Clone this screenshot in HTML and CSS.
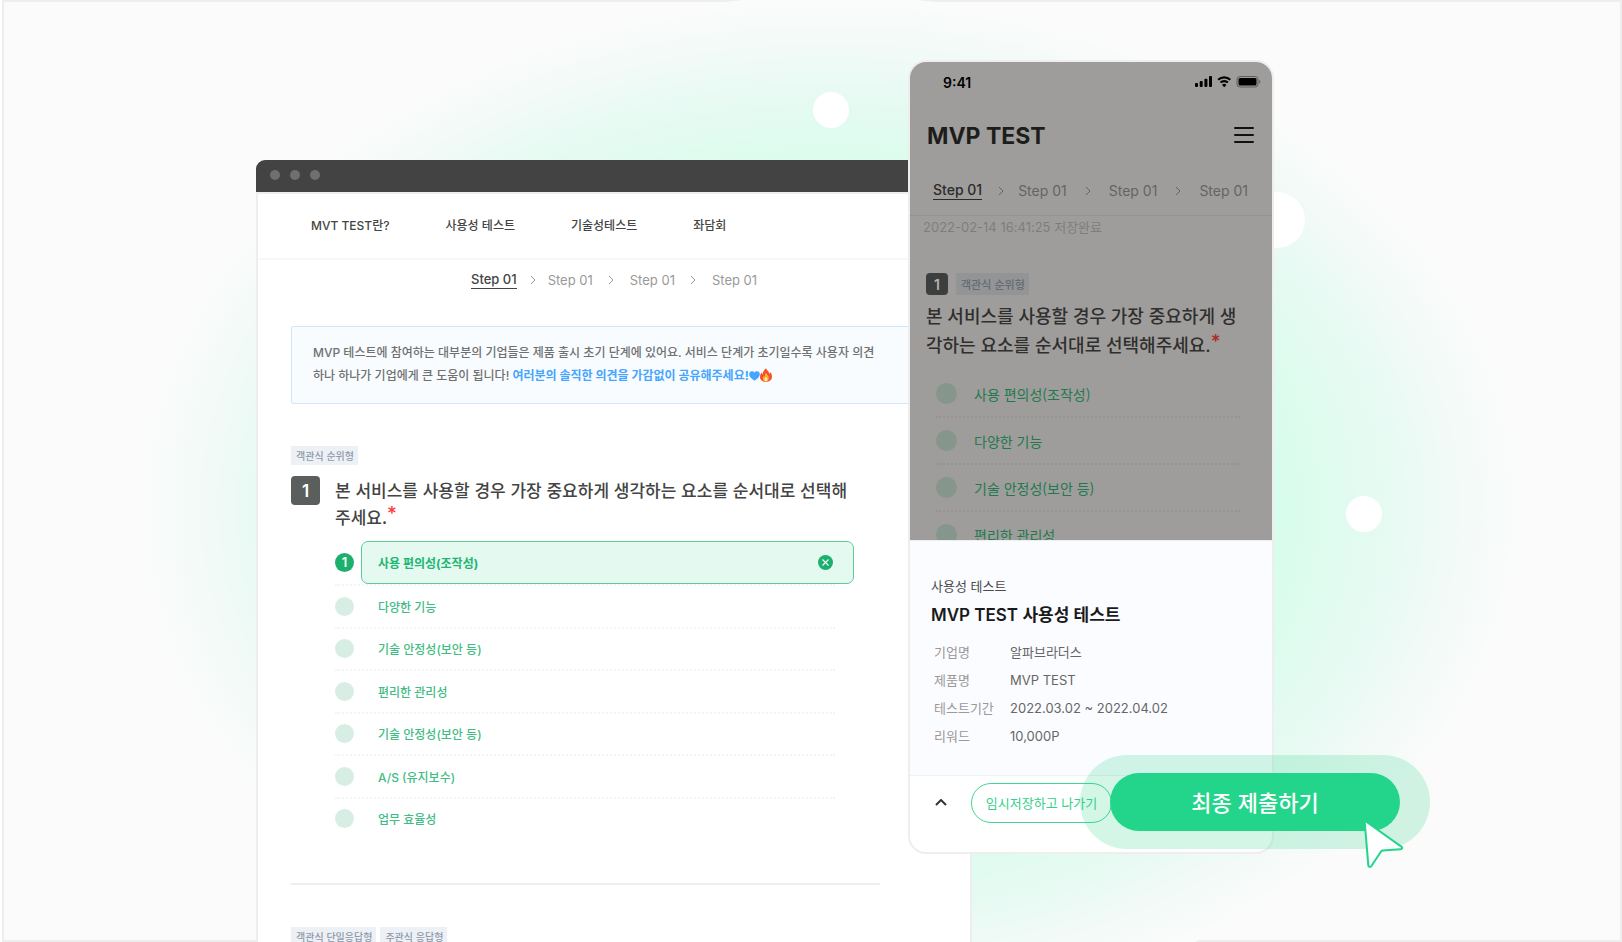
FILE: index.html
```html
<!DOCTYPE html>
<html lang="ko">
<head>
<meta charset="utf-8">
<meta name="viewport" content="width=device-width, initial-scale=1">
<title>MVP TEST</title>
<link rel="stylesheet" href="styles.css">
</head>
<body>
<main class="scene">
  <div class="frame"></div>
  <div class="glow"></div>
  <span class="bubble bubble-top"></span>
  <span class="bubble bubble-side"></span>
  <span class="bubble bubble-right"></span>

  <section class="browser">
    <div class="titlebar"><i></i><i></i><i></i></div>
    <div class="page">
      <nav class="menu">
        <a href="#">MVT TEST란?</a>
        <a href="#">사용성 테스트</a>
        <a href="#">기술성테스트</a>
        <a href="#">좌담회</a>
      </nav>
      <ol class="steps">
        <li class="current"><span>Step 01</span></li>
        <li><svg viewBox="0 0 6 10"><path d="M1 1l4 4-4 4"/></svg><span>Step 01</span></li>
        <li><svg viewBox="0 0 6 10"><path d="M1 1l4 4-4 4"/></svg><span>Step 01</span></li>
        <li><svg viewBox="0 0 6 10"><path d="M1 1l4 4-4 4"/></svg><span>Step 01</span></li>
      </ol>
      <p class="notice">MVP 테스트에 참여하는 대부분의 기업들은 제품 출시 초기 단계에 있어요. 서비스 단계가 초기일수록 사용자 의견<br>하나 하나가 기업에게 큰 도움이 됩니다! <strong>여러분의 솔직한 의견을 가감없이 공유해주세요!<svg class="heart" viewBox="0 0 11 10"><path d="M5.500 9.800C2 7.200.2 5.500.2 3.200.2 1.500 1.400.3 3 .3c1 0 2 .5 2.500 1.400C6 .8 7 .3 8 .3c1.600 0 2.800 1.200 2.800 2.900 0 2.300-1.800 4-5.300 6.600z"/></svg><svg class="fire" viewBox="0 0 12 14"><path fill="#f4512c" d="M6 .2c.7 2 3.200 3.200 3.400 5.600.6-.4.800-1 .8-1.700C11.400 5.400 12 7 12 8.800 12 11.800 9.400 14 6 14S0 11.800 0 8.900c0-2 .9-3.300 1.800-4.400 0 1 .3 1.600.9 2C2.600 3.800 4.200 2 6 .2z"/><path fill="#ffb02e" d="M6.200 4.800c.2 1.700 2.600 2.700 2.600 5.300 0 2-1.200 3.500-2.900 3.500s-3-1.300-3-3.200c0-1.200.5-2 1.100-2.700.1.700.4 1 .8 1.200-.1-1.700.3-3 1.400-4.100z"/><path fill="#fff0b0" d="M6 9c.9.9 1.400 1.600 1.400 2.600S6.800 13.400 6 13.400s-1.500-.7-1.500-1.800S5.200 9.800 6 9z"/></svg></strong></p>

      <section class="question">
        <span class="tag">객관식 순위형</span>
        <div class="question-row">
          <span class="number">1</span>
          <h2>본 서비스를 사용할 경우 가장 중요하게 생각하는 요소를 순서대로 선택해<br>주세요.<sup>*</sup></h2>
        </div>
        <ol class="options">
          <li class="picked">
            <span class="dot">1</span>
            <div class="choice"><span>사용 편의성(조작성)</span>
              <button class="remove" type="button" aria-label="선택 취소"><svg viewBox="0 0 14 14"><circle cx="7" cy="7" r="7"/><path d="M4.200 4.200l5.600 5.600M9.800 4.200l-5.600 5.600"/></svg></button>
            </div>
          </li>
          <li><span class="dot"></span><button type="button">다양한 기능</button></li>
          <li><span class="dot"></span><button type="button">기술 안정성(보안 등)</button></li>
          <li><span class="dot"></span><button type="button">편리한 관리성</button></li>
          <li><span class="dot"></span><button type="button">기술 안정성(보안 등)</button></li>
          <li><span class="dot"></span><button type="button">A/S (유지보수)</button></li>
          <li><span class="dot"></span><button type="button">업무 효율성</button></li>
        </ol>
      </section>
      <hr>
      <div class="tags"><span class="tag">객관식 단일응답형</span><span class="tag">주관식 응답형</span></div>
    </div>
  </section>

  <section class="phone">
    <div class="screen">
      <div class="status">
        <span>9:41</span>
        <svg viewBox="0 0 66 12" aria-hidden="true">
          <rect x="0" y="7" width="3" height="4" rx="1"/><rect x="4.700" y="5" width="3" height="6" rx="1"/><rect x="9.400" y="2.700" width="3" height="8.300" rx="1"/><rect x="14" y="0" width="3" height="11" rx="1"/>
          <path d="M29.200 2.500c2 0 3.900.8 5.300 2.100l1.500-1.500A9.800 9.800 0 0 0 29.200.2a9.800 9.800 0 0 0-6.800 2.900l1.500 1.500a7.700 7.700 0 0 1 5.300-2.100z"/><path d="M29.200 6.200c1.100 0 2.100.4 2.900 1.100l1.500-1.500a6.300 6.300 0 0 0-8.800 0l1.500 1.500c.8-.7 1.800-1.100 2.900-1.100z"/><path d="M29.200 11.200l2.200-2.300a3.200 3.200 0 0 0-4.400 0z"/>
          <rect x="42" y=".5" width="21" height="10.500" rx="3" fill="none" stroke="#000" stroke-opacity=".4"/><rect x="43.500" y="2" width="18" height="7.500" rx="1.500"/><path d="M64.200 4v3.600c.8-.3 1.200-1 1.200-1.800s-.4-1.500-1.200-1.800z" opacity=".4"/>
        </svg>
      </div>
      <header class="brand">
        <h1>MVP TEST</h1>
        <button type="button" aria-label="메뉴"><svg viewBox="0 0 20 16"><path d="M1 1h18M1 8h18M1 15h18"/></svg></button>
      </header>
      <ol class="steps">
        <li class="current"><span>Step 01</span></li>
        <li><svg viewBox="0 0 6 10"><path d="M1 1l4 4-4 4"/></svg><span>Step 01</span></li>
        <li><svg viewBox="0 0 6 10"><path d="M1 1l4 4-4 4"/></svg><span>Step 01</span></li>
        <li><svg viewBox="0 0 6 10"><path d="M1 1l4 4-4 4"/></svg><span>Step 01</span></li>
      </ol>
      <p class="saved">2022-02-14 16:41:25 저장완료</p>
      <div class="question-meta"><span class="number">1</span><span class="tag">객관식 순위형</span></div>
      <h2>본 서비스를 사용할 경우 가장 중요하게 생<br>각하는 요소를 순서대로 선택해주세요.<sup>*</sup></h2>
      <ol class="options">
        <li><span class="dot"></span><button type="button">사용 편의성(조작성)</button></li>
        <li><span class="dot"></span><button type="button">다양한 기능</button></li>
        <li><span class="dot"></span><button type="button">기술 안정성(보안 등)</button></li>
        <li><span class="dot"></span><button type="button">편리한 관리성</button></li>
      </ol>
    </div>
    <div class="sheet">
      <p>사용성 테스트</p>
      <h3>MVP TEST 사용성 테스트</h3>
      <dl>
        <dt>기업명</dt><dd>알파브라더스</dd>
        <dt>제품명</dt><dd>MVP TEST</dd>
        <dt>테스트기간</dt><dd>2022.03.02 ~ 2022.04.02</dd>
        <dt>리워드</dt><dd>10,000P</dd>
      </dl>
    </div>
    <footer class="actions">
      <button class="fold" type="button" aria-label="접기"><svg viewBox="0 0 12 7"><path d="M1 6l5-5 5 5"/></svg></button>
      <button class="save" type="button">임시저장하고 나가기</button>
    </footer>
  </section>

  <div class="halo">
    <button type="button">최종 제출하기</button>
    <svg class="cursor" viewBox="0 0 40 50"><path d="M1.800 3.200C1.700 1.800 2.600 1.200 3.700 2l34.600 24.600c1.500 1.100 1 2.600-.8 2.700l-17.800 1.200a2 2 0 0 0-1.500.8L8.400 46c-1.100 1.500-3 1-3.100-.9z"/></svg>
  </div>
</main>
</body>
</html>
```
FILE: styles.css
```css
* { box-sizing: border-box; }
body { margin: 0; background: #fff; color: #444; font-family: Inter, "Noto Sans CJK KR", sans-serif; font-size: 13px; }
h1, h2, h3, p, ol, dl, dd { margin: 0; padding: 0; }
ol { list-style: none; }
button { padding: 0; border: 0; background: none; color: inherit; font: inherit; cursor: pointer; }
svg { display: block; fill: none; }
a { color: inherit; text-decoration: none; }

.scene { position: relative; height: 100vh; overflow: hidden; }
.frame { position: absolute; inset: 0 0 0 2px; border: 2px solid #eee; background: #fbfbfb; }
.glow { position: absolute; left: calc(50% - 676px); top: -4px; width: 1390px; height: 1022px; border-radius: 50%; background: radial-gradient(closest-side, #d6fdeb 0%, #d6fdeb 62%, #e6faf2 80%, #f3faf8 91%, #fbfbfb 100%); }
.bubble { position: absolute; width: 36px; height: 36px; border-radius: 50%; background: #fff; }
.bubble-top { left: calc(50% + 2px); top: 92px; }
.bubble-side { left: calc(50% + 438px); top: 192px; width: 56px; height: 56px; }
.bubble-right { left: calc(50% + 535px); top: 496px; }

.browser { position: absolute; left: calc(50% - 555px); top: 160px; bottom: 0; width: 716px; display: flex; flex-direction: column; overflow: hidden; }
.titlebar { display: flex; align-items: center; gap: 10px; flex: none; height: 32px; padding: 0 0 2px 14px; border-radius: 9px 9px 0 0; background: #434343; }
.titlebar i { width: 10px; height: 10px; border-radius: 50%; background: #707070; }
.page { flex: 1; border: 2px solid #eee; border-bottom: 0; background: #fff; overflow: hidden; }
.menu { display: flex; align-items: center; gap: 56px; height: 66px; padding: 0 0 3px 53px; border-bottom: 2px solid #f7f7f7; font-size: 12px; font-weight: 500; }

.steps { display: flex; color: #999; }
.steps li { display: flex; align-items: center; }
.steps svg { width: 6px; height: 10px; stroke: currentColor; stroke-width: 1; }
.steps .current { color: #444; font-weight: 500; }
.steps .current span { border-bottom: 1px solid currentColor; }
.browser .steps { padding: 11px 0 1px 213px; line-height: 17px; font-size: 13px; }
.browser .steps svg { margin: 0 16px 0 15px; }
.browser .steps li:nth-child(2) svg { margin: 0 12px 0 13px; }

.notice { margin: 36px 0 0 33px; padding: 14px 0 16px 21px; border: 1px solid #cfe6fc; border-radius: 2px; background: #f8fcff; color: #707070; font-size: 12px; font-weight: 500; line-height: 23px; white-space: nowrap; }
.notice strong { color: #45a5ff; font-weight: 700; }
.notice svg { display: inline-block; vertical-align: -2px; }
.notice .heart { width: 11px; height: 10px; fill: #45a5ff; vertical-align: -1px; }
.fire { width: 12px; height: 14px; }

.question { padding: 42px 0 0 33px; }
.tag { display: inline-block; padding: 0 4px 0 5px; background: #edf1f5; color: #8d99ab; font: 500 10px/19px "Noto Sans CJK KR", sans-serif; vertical-align: top; }
.number { display: grid; place-items: center; flex: none; border-radius: 4px; background: #5a5f5d; color: #fff; font-weight: 600; }
.question-row { display: flex; gap: 15px; padding-top: 11px; }
.question-row .number { width: 29px; height: 29px; font-size: 17px; }
h2 { font-weight: 500; white-space: nowrap; }
.question-row h2 { font-family: "Noto Sans CJK KR", sans-serif; font-size: 17px; line-height: 27px; }
sup { color: #ff3b3b; font-family: Inter, sans-serif; font-size: 19px; line-height: 0; vertical-align: 4px; }

.options li { display: flex; align-items: center; border-bottom: 2px dotted #f4f4f4; }
.options { color: #3fbd84; }
.dot { display: grid; place-items: center; flex: none; width: 19px; height: 19px; border-radius: 50%; background: #d8eee5; }
.browser .options { display: grid; grid-template-columns: 100%; grid-template-rows: 45px repeat(6, 1fr); width: 500px; height: 300px; margin: 11px 0 0 44px; font-size: 12px; font-weight: 500; }
.browser .options li { gap: 24px; }
.browser .options li:last-child { border-color: transparent; }
.browser .options .picked { gap: 7px; color: #1fb573; font-weight: 700; }
.picked .dot { background: #1bb06e; color: #fff; font: 600 13px/19px Inter, sans-serif; }
.choice { display: flex; flex: none; align-items: center; justify-content: space-between; width: 493px; height: 43px; padding: 0 20px 0 16px; border: 1px solid #5fcb9b; border-radius: 7px; background: #e4f9f0; }
.remove svg { width: 15px; height: 15px; fill: #1bb06e; stroke-width: 1; }
.remove path { stroke: #fff; }
.page hr { width: 589px; height: 2px; margin: 42px 0 42px 33px; border: 0; background: #eee; }
.tags { display: flex; gap: 4px; padding-left: 33px; }

.phone { position: absolute; left: calc(50% + 97px); top: 60px; width: 366px; border: 2px solid #eee; border-radius: 18px; background: #fff; overflow: hidden; }
.screen { height: 478px; overflow: hidden; background: #9f9d9b; color: #2f2f2e; }
.status { display: flex; align-items: center; justify-content: space-between; height: 40px; padding: 0 11px 0 33px; color: #000; font-size: 14px; font-weight: 600; }
.status svg { width: 66px; height: 12px; fill: #000; }
.brand { display: flex; align-items: center; justify-content: space-between; padding: 17px 18px 0 17px; color: #1d1d1b; }
.brand h1 { padding-top: 2px; font-size: 23px; font-weight: 700; line-height: 31px; }
.brand button { padding-bottom: 2px; }
.brand svg { width: 20px; height: 16px; stroke: #111; stroke-width: 2; stroke-linecap: round; }
.phone .steps { align-items: center; height: 64px; padding: 14px 0 0 23px; border-bottom: 1px solid #939290; color: #656463; font-size: 14px; line-height: 18px; }
.phone .steps .current { color: #2b2b2b; }
.phone .steps svg { margin: 0 18px; }
.phone .steps li:nth-child(2) svg { margin: 0 14px 0 16px; }
.saved { padding-left: 13px; color: #7e7d7b; font-size: 13px; line-height: 23px; }
.question-meta { display: flex; gap: 8px; padding: 34px 0 0 16px; }
.question-meta .number { width: 22px; height: 22px; background: #3c3f3d; color: #b5b4b2; font-size: 14px; }
.question-meta .tag { background: #929496; color: #646b74; font-size: 11px; line-height: 22px; }
.screen h2 { padding: 7px 0 0 16px; font-size: 18px; line-height: 29px; }
.screen sup { color: #a92c2b; }
.screen .options { padding: 11px 32px 0 26px; color: #22794f; font: 14px "Noto Sans CJK KR", sans-serif; }
.screen .options li { height: 47px; gap: 17px; border-color: #969492; }
.screen .dot { width: 21px; height: 21px; background: #86968d; }

.sheet { padding: 35px 21px 25px; border-top: 1px solid #eee; border-bottom: 1px solid #f1f1f1; background: #fbfcff; }
.sheet p { line-height: 20px; color: #4a4a4a; }
.sheet h3 { padding-top: 5px; color: #1a1a1a; font-size: 17px; font-weight: 600; line-height: 28px; }
.sheet dl { display: grid; grid-template-columns: 76px 1fr; padding: 9px 0 0 3px; line-height: 28px; }
.sheet dt { color: #999; }
.sheet dd { color: #666; }
.actions { display: flex; align-items: flex-start; padding: 7px 25px 29px; }
.fold { padding: 16px 24px 0 0; }
.fold svg { width: 12px; height: 7px; stroke: #333; stroke-width: 2; }
.save { width: 141px; height: 40px; padding-bottom: 2px; border: 1px solid #3fd793; border-radius: 20px; color: #35d08a; font-family: "Noto Sans CJK KR", sans-serif; }

.halo { position: absolute; left: calc(50% + 269px); top: 755px; padding: 18px 30px; border-radius: 47px; background: rgba(33, 208, 134, .2); }
.halo > button { display: block; width: 290px; height: 58px; padding-bottom: 2px; border-radius: 29px; background: #22d58a; color: #fff; font: 500 22px/56px "Noto Sans CJK KR", sans-serif; }
.cursor { position: absolute; right: 27px; bottom: -21px; width: 40px; height: 50px; fill: #fff; stroke: #22d58a; stroke-width: 2; }
```
